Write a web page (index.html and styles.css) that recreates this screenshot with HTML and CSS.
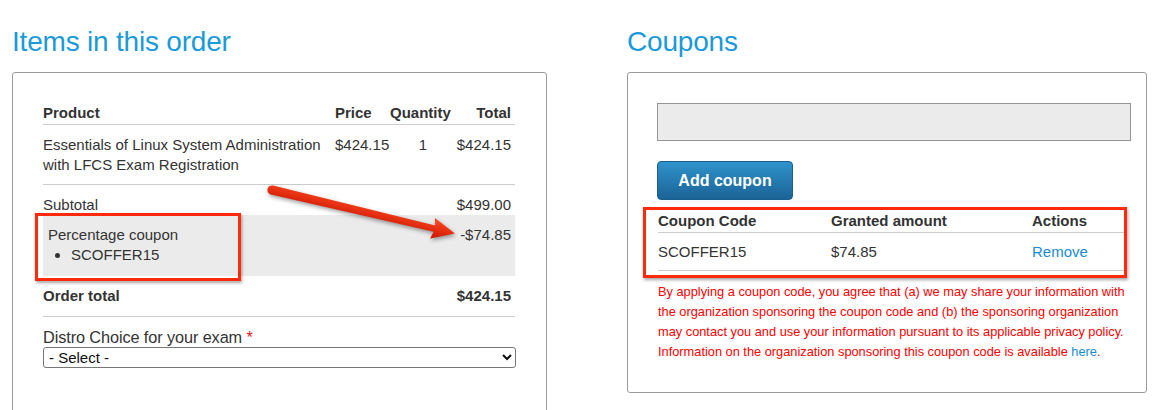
FILE: index.html
```html
<!DOCTYPE html>
<html lang="en">
<head>
<meta charset="utf-8">
<title>Checkout</title>
<link rel="stylesheet" href="styles.css">
</head>
<body>
<div class="page">
  <section class="col col-left">
    <h2 class="heading">Items in this order</h2>
    <div class="panel panel-left">
      <table class="items">
        <colgroup>
          <col class="c-prod"><col class="c-price"><col class="c-qty"><col class="c-total">
        </colgroup>
        <thead>
          <tr><th class="prod">Product</th><th>Price</th><th class="qty">Quantity</th><th class="num">Total</th></tr>
        </thead>
        <tbody>
          <tr class="line-item">
            <td class="prod">Essentials of Linux System Administration with LFCS Exam Registration</td>
            <td>$424.15</td>
            <td class="qty">1</td>
            <td class="num">$424.15</td>
          </tr>
          <tr class="subtotal">
            <td class="prod">Subtotal</td><td></td><td></td><td class="num">$499.00</td>
          </tr>
          <tr class="discount">
            <td class="prod" colspan="3">
              <div class="discount-name">Percentage coupon</div>
              <ul class="codes"><li>SCOFFER15</li></ul>
            </td>
            <td class="num">-$74.85</td>
          </tr>
          <tr class="grand">
            <td class="prod">Order total</td><td></td><td></td><td class="num">$424.15</td>
          </tr>
        </tbody>
      </table>
      <label class="field-label" for="distro">Distro Choice for your exam <span class="req">*</span></label>
      <select id="distro" class="select"><option>- Select -</option></select>

      <div class="mark mark-left"></div>
      <svg class="arrow" width="535" height="200" viewBox="0 0 535 200">
        <defs>
          <linearGradient id="ag" x1="0" y1="0" x2="0" y2="1">
            <stop offset="0" stop-color="#ff4a22"/>
            <stop offset="1" stop-color="#c91400"/>
          </linearGradient>
        </defs>
        <g transform="translate(259 117) rotate(13.4)">
          <path d="M0,-4.6 L167,-3.2 L165,-10.5 L188,0 L165,10.5 L167,3.2 L0,4.6 A4.6,4.6 0 0 1 0,-4.6 Z" fill="url(#ag)"/>
        </g>
      </svg>
    </div>
  </section>

  <section class="col col-right">
    <h2 class="heading">Coupons</h2>
    <div class="panel panel-right">
      <input class="coupon-input" type="text" aria-label="Coupon code">
      <button class="btn" type="button">Add coupon</button>
      <table class="coupons">
        <colgroup><col class="cc-code"><col class="cc-amt"><col class="cc-act"></colgroup>
        <thead>
          <tr><th>Coupon Code</th><th>Granted amount</th><th>Actions</th></tr>
        </thead>
        <tbody>
          <tr><td>SCOFFER15</td><td>$74.85</td><td><a class="link" href="#">Remove</a></td></tr>
        </tbody>
      </table>
      <p class="notice">By applying a coupon code, you agree that (a) we may share your information with the organization sponsoring the coupon code and (b) the sponsoring organization may contact you and use your information pursuant to its applicable privacy policy. Information on the organization sponsoring this coupon code is available <a class="link" href="#">here</a>.</p>
      <div class="mark mark-right"></div>
    </div>
  </section>
</div>
</body>
</html>
```

FILE: styles.css
```css
* { box-sizing: border-box; }
html, body { margin: 0; padding: 0; background: #fff; }
body {
  font-family: "Liberation Sans", Arial, Helvetica, sans-serif;
  color: #333;
  font-size: 15px;
  line-height: 20px;
  overflow: hidden;
  height: 410px;
}
.page {
  display: flex;
  gap: 80px;
  padding-left: 12px;
}
.col-left { width: 535px; flex: none; }
.col-right { width: 520px; flex: none; }

.heading {
  margin: 26px 0 14px;
  font-size: 28px;
  line-height: 32px;
  font-weight: normal;
  color: #1b9ad8;
  letter-spacing: -0.2px;
}

.panel {
  position: relative;
  border: 1px solid #9a9a9a;
  border-radius: 3px;
}
.panel-left {
  padding: 27px 31px 0 30px;
  height: 360px;
}
.panel-right {
  padding: 30px 16px 30px 29px;
}

/* items table */
.items {
  width: 472px;
  border-collapse: collapse;
  table-layout: fixed;
}
.c-prod { width: 292px; }
.c-price { width: 55px; }
.c-qty { width: 66px; }
.c-total { width: 59px; }
.items th, .items td { padding: 0; text-align: left; vertical-align: top; white-space: normal; }
.items th { font-weight: bold; padding: 3px 0 1px; border-bottom: 1px solid #ccc; }
.items .num { text-align: right; padding-right: 4px; }
.items .qty { text-align: center; }
.items th.qty { text-align: left; }
.items .prod { padding-right: 8px; }
.line-item td { padding-top: 10px; padding-bottom: 9px; border-bottom: 1px solid #ccc; }
.subtotal td { padding-top: 10px; padding-bottom: 0; }
.discount td { background: #ebebeb; padding-top: 10px; padding-bottom: 11px; }
.discount td.prod { padding-left: 5px; }
.codes { margin: 0; padding-left: 23px; }
.grand td { font-weight: bold; padding-top: 10px; padding-bottom: 10px; border-bottom: 1px solid #ccc; }

.field-label {
  display: block;
  margin-top: 10px;
  font-size: 16.3px;
  line-height: 20px;
  letter-spacing: -0.1px;
}
.req { color: #e4141b; }
.select {
  display: block;
  width: 473px;
  height: 21px;
  font-family: "Liberation Sans", Arial, sans-serif;
  font-size: 15px;
  color: #111;
  border: 1px solid #777;
  border-radius: 3px;
  background: #fff;
  padding: 0 1px;
}

/* coupons */
.coupon-input {
  display: block;
  width: 474px;
  height: 38px;
  background: #ebebeb;
  border: 1px solid #959595;
  border-radius: 0;
  margin: 0;
}
.btn {
  display: block;
  margin-top: 20px;
  width: 136px;
  height: 39px;
  border: 1px solid #1d5f8c;
  border-radius: 4px;
  background: linear-gradient(#2f93cb, #1b6396);
  color: #fff;
  font-family: "Liberation Sans", Arial, sans-serif;
  font-size: 16px;
  font-weight: bold;
  padding: 0;
}
.coupons {
  width: 466px;
  margin-top: 10px;
  margin-left: 1px;
  border-collapse: collapse;
  table-layout: fixed;
}
.cc-code { width: 173px; }
.cc-amt { width: 201px; }
.cc-act { width: 92px; }
.coupons th, .coupons td { text-align: left; padding: 0; }
.coupons th { padding: 1px 0 1px; border-bottom: 1px solid #ccc; }
.coupons td { padding: 9px 0 8px; border-bottom: 1px solid #ccc; }
.link { color: #1b8bd3; text-decoration: none; }

.notice {
  margin: 11px 0 0 1px;
  color: #f00;
  font-size: 12.8px;
  line-height: 20px;
}

/* annotations drawn over the screenshot */
.mark {
  position: absolute;
  border: 3px solid #ff2a0c;
  box-shadow: 1px 2px 3px rgba(0,0,0,0.35);
  pointer-events: none;
}
.mark-left { left: 22px; top: 140px; width: 206px; height: 68px; }
.mark-right { left: 15px; top: 134px; width: 484px; height: 71px; }
.arrow {
  position: absolute;
  left: 0;
  top: 0;
  overflow: visible;
  pointer-events: none;
  filter: drop-shadow(1px 2px 2px rgba(0,0,0,0.4));
}
```
